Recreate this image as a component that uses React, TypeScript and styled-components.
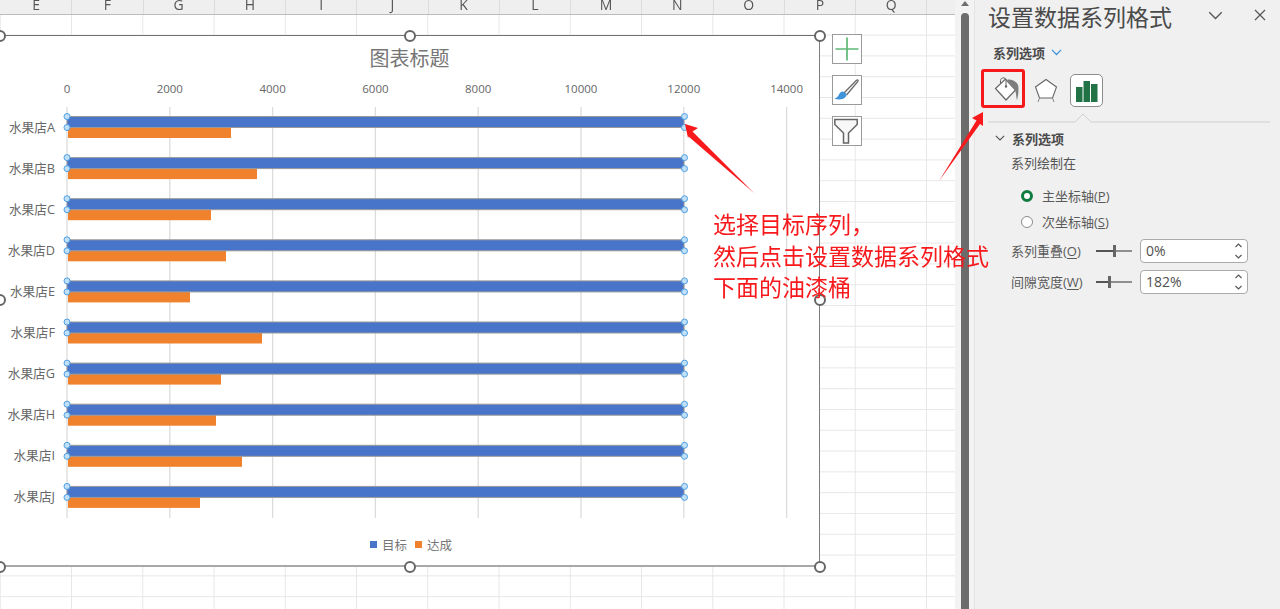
import React from "react";
import styled, { createGlobalStyle } from "styled-components";

const FONT = `"Open Sans", "Noto Sans CJK SC", sans-serif`;
const COL_W = 71.25;

const Global = createGlobalStyle`
  html, body { margin: 0; padding: 0; background: #fff; overflow: hidden; }
  #root { width: 1280px; height: 609px; }
`;

const Page = styled.div`
  position: relative;
  display: flex;
  width: 1280px;
  height: 609px;
  overflow: hidden;
  font-family: ${FONT};
  filter: blur(0.4px);
`;

/* ---------- spreadsheet ---------- */
const Sheet = styled.div`
  position: relative;
  flex: 0 0 955px;
  display: flex;
  flex-direction: column;
  overflow: hidden;
`;
const ColumnHeader = styled.div`
  flex: 0 0 15px;
  display: flex;
  padding-left: 1px;
  background: #efefef;
  border-bottom: 1px solid #bcbcbc;
  box-sizing: border-box;
`;
const ColumnCell = styled.div`
  flex: 0 0 ${COL_W}px;
  box-sizing: border-box;
  border-right: 1px solid #dcdcdc;
  text-align: center;
  font-size: 14px;
  line-height: 10px;
  color: #555;
`;
const Grid = styled.div`
  flex: 1;
  background-image:
    linear-gradient(to right, transparent calc(100% - 1px), #e7e7e7 calc(100% - 1px)),
    linear-gradient(to bottom, transparent calc(100% - 1px), #e7e7e7 calc(100% - 1px));
  background-size: ${COL_W}px 100%, 100% 20.8px;
  background-position: 0.75px 0, 0 -0.2px;
`;

const ChartFrame = styled.div`
  position: absolute;
  left: 0;
  top: 35px;
  width: 820px;
  height: 532px;
  box-sizing: border-box;
  background: #fff;
  border-top: 1.5px solid #6f6f6f;
  border-right: 1.5px solid #7d7d7d;
  border-bottom: 2px solid #a8a8a8;
  display: flex;
  flex-direction: column;
`;
const ChartTitle = styled.div`
  flex: 0 0 45px;
  text-align: center;
  font-size: 20px;
  line-height: 45px;
  color: #767676;
`;
const PlotSvg = styled.svg`
  display: block;
  flex: 0 0 449px;
  width: 820px;
  height: 449px;
`;
const AxisText = styled.text<{ $size?: number }>`
  font-family: ${FONT};
  font-size: ${(p) => p.$size ?? 11.5}px;
  fill: #666;
`;
const Legend = styled.div`
  flex: 1;
  display: flex;
  justify-content: center;
  align-items: center;
  gap: 8px;
  padding: 0 0 6px 3px;
  font-size: 12.5px;
  color: #767676;
`;
const LegendItem = styled.span`
  display: flex;
  align-items: center;
  gap: 5px;
`;
const Swatch = styled.i<{ $c: string }>`
  width: 7px;
  height: 7px;
  background: ${(p) => p.$c};
`;
const Handle = styled.i<{ $x: number; $y: number }>`
  position: absolute;
  left: ${(p) => p.$x - 6}px;
  top: ${(p) => p.$y - 6}px;
  width: 12px;
  height: 12px;
  box-sizing: border-box;
  border-radius: 50%;
  border: 2px solid #666;
  background: #fff;
`;
const SideButtons = styled.div`
  position: absolute;
  left: 832px;
  top: 34px;
  display: flex;
  flex-direction: column;
  gap: 11px;
`;
const SideButton = styled.div`
  width: 30px;
  height: 30px;
  box-sizing: border-box;
  border: 1.5px solid #9a9a9a;
  background: #fff;
  display: flex;
  align-items: center;
  justify-content: center;
`;

/* ---------- scrollbar ---------- */
const ScrollTrack = styled.div`
  position: relative;
  flex: 0 0 20px;
  background: #f3f3f3;
  border-right: 1px solid #e4e4e4;
  box-sizing: border-box;
`;
const ScrollArrow = styled.div`
  position: absolute;
  left: 6px;
  top: 1px;
  border-left: 4px solid transparent;
  border-right: 4px solid transparent;
  border-bottom: 5px solid #6e6e6e;
`;
const ScrollThumb = styled.div`
  position: absolute;
  left: 6px;
  top: 13px;
  bottom: 0;
  width: 8px;
  background: #6c6c6c;
  border-radius: 4px 4px 0 0;
`;

/* ---------- format pane ---------- */
const Pane = styled.aside`
  flex: 1;
  background: #f0f0f0;
  color: #444;
  display: flex;
  flex-direction: column;
  padding-left: 13px;
  box-sizing: border-box;
`;
const PaneHead = styled.div`
  flex: 0 0 35px;
  display: flex;
  align-items: center;
  padding-right: 14px;
`;
const PaneTitle = styled.div`
  flex: 1;
  font-size: 23px;
  line-height: 35px;
  white-space: nowrap;
  color: #4a4a4a;
`;
const HeadIcons = styled.div`
  display: flex;
  gap: 31px;
  align-items: center;
  margin-top: -5px;
  margin-right: 0;
`;
const OptionLabel = styled.div`
  flex: 0 0 35px;
  display: flex;
  align-items: center;
  gap: 6px;
  padding-left: 5px;
  font-size: 13px;
  font-weight: 700;
  color: #4a4a4a;
`;
const TabRow = styled.div`
  flex: 0 0 46px;
  display: flex;
  align-items: center;
  margin-top: -3px;
`;
const IconTab = styled.div<{ $active?: boolean }>`
  width: 33px;
  height: 33px;
  margin-right: 8px;
  box-sizing: border-box;
  display: flex;
  align-items: center;
  justify-content: center;
  border-radius: 5px;
  ${(p) => (p.$active ? "background:#fff;border:1px solid #8c8c8c;" : "")}
`;
const DividerSvg = styled.svg`
  display: block;
  flex: 0 0 10px;
  width: 282px;
  height: 10px;
`;
const Section = styled.div`
  flex: 0 0 30px;
  display: flex;
  align-items: center;
  gap: 7px;
  padding-left: 7px;
  margin-top: 0;
  font-size: 13px;
  font-weight: 700;
  color: #4a4a4a;
`;
const SubLabel = styled.div`
  flex: 0 0 20px;
  padding-left: 23px;
  margin-top: 1px;
  font-size: 13px;
  line-height: 18px;
  color: #555;
`;
const Radios = styled.div`
  display: flex;
  flex-direction: column;
  padding: 11px 0 0 33px;
  gap: 5px;
`;
const RadioRow = styled.div`
  height: 21px;
  display: flex;
  align-items: center;
  gap: 9px;
  font-size: 13px;
  color: #5a5a5a;
`;
const RadioDot = styled.i<{ $on?: boolean }>`
  width: 12px;
  height: 12px;
  box-sizing: border-box;
  border-radius: 50%;
  background: #fff;
  border: ${(p) => (p.$on ? "3.5px solid #107c41" : "1.5px solid #8a8a8a")};
`;
const Fields = styled.div`
  display: flex;
  flex-direction: column;
  gap: 8px;
  padding: 7px 0 0 23px;
`;
const FieldRow = styled.div`
  height: 23px;
  display: flex;
  align-items: center;
`;
const FieldLabel = styled.span`
  flex: 0 0 85px;
  font-size: 13px;
  color: #5a5a5a;
  white-space: nowrap;
  u { text-underline-offset: 2px; }
`;
const Slider = styled.div<{ $pos: number }>`
  position: relative;
  flex: 0 0 36px;
  height: 2px;
  background: #8f8f8f;
  &::before {
    content: "";
    position: absolute;
    left: 0;
    top: 0;
    height: 2px;
    width: ${(p) => p.$pos}px;
    background: #555;
  }
  &::after {
    content: "";
    position: absolute;
    left: ${(p) => p.$pos}px;
    top: -5px;
    width: 3px;
    height: 12px;
    background: #666;
  }
`;
const SpinBox = styled.div`
  margin-left: 8px;
  flex: 0 0 108px;
  height: 24px;
  box-sizing: border-box;
  border: 1px solid #aaa;
  border-radius: 4px;
  background: #fff;
  display: flex;
  align-items: center;
  justify-content: space-between;
  padding: 0 4px 0 5px;
  font-size: 14px;
  color: #505050;
`;

/* ---------- annotation ---------- */
const Note = styled.div`
  position: absolute;
  left: 713px;
  top: 208px;
  font-size: 23px;
  line-height: 31.5px;
  color: #f7191c;
  white-space: pre;
  font-family: "Noto Sans CJK SC", sans-serif;
`;
const RedBox = styled.div`
  position: absolute;
  left: 981px;
  top: 69px;
  width: 44px;
  height: 39px;
  box-sizing: border-box;
  border: 3px solid #f5191c;
  border-radius: 3px;
`;
const Overlay = styled.svg`
  position: absolute;
  left: 0;
  top: 0;
  width: 1280px;
  height: 609px;
  pointer-events: none;
`;

/* ---------- data ---------- */
const columns = "EFGHIJKLMNOPQ".split("");
const stores = ["A", "B", "C", "D", "E", "F", "G", "H", "I", "J"];
const achieved = [231, 257, 211, 226, 190, 262, 221, 216, 242, 200];
const ticks = [0, 2000, 4000, 6000, 8000, 10000, 12000, 14000];
const X0 = 67;
const STEP = 102.8;
const handles: [number, number][] = [
  [0, 35.5], [409.5, 35.5], [819.5, 35.5], [0, 300], [819.5, 300], [0, 566.7], [409.5, 566.7], [819.5, 566.7],
];

function Chevron({ c = "#555", w = 12, sw = 1.4 }: { c?: string; w?: number; sw?: number }) {
  return (
    <svg width={w} height={w * 0.6} viewBox="0 0 12 7.2">
      <path d="M1 1l5 5 5-5" fill="none" stroke={c} strokeWidth={sw} />
    </svg>
  );
}

function Spinner() {
  return (
    <svg width="9" height="20" viewBox="0 0 9 20">
      <path d="M1.5 6l3-3 3 3M1.5 14l3 3 3-3" fill="none" stroke="#555" strokeWidth="1.1" />
    </svg>
  );
}

export default function App() {
  return (
    <Page>
      <Global />
      <Sheet>
        <ColumnHeader>
          {columns.map((c) => (
            <ColumnCell key={c}>{c}</ColumnCell>
          ))}
        </ColumnHeader>
        <Grid />
        <ChartFrame>
          <ChartTitle>图表标题</ChartTitle>
          <PlotSvg viewBox="0 81 820 449">
            {ticks.map((t, i) => {
              const x = X0 + i * STEP;
              return (
                <g key={t}>
                  <line x1={x} x2={x} y1={107} y2={518} stroke="#dcdcdc" strokeWidth="1.3" />
                  <AxisText x={x} y={93} textAnchor="middle">{t}</AxisText>
                </g>
              );
            })}
            {stores.map((s, i) => {
              const y = 116.5 + i * 41.1;
              return (
                <g key={s}>
                  <AxisText $size={12.7} x={55} y={y + 15} textAnchor="end">{`水果店${s}`}</AxisText>
                  <rect x={68} y={y + 11} width={achieved[i] - 68} height={10.5} fill="#f0822e" />
                  <rect x={67} y={y} width={617} height={11} fill="#4874c9" stroke="#9a9a9a" strokeWidth="1" />
                  {[[67, y], [67, y + 11], [684.5, y], [684.5, y + 11]].map(([hx, hy], k) => (
                    <circle key={k} cx={hx} cy={hy} r="3" fill="#bfe0f8" stroke="#4f9fe0" strokeWidth="1" />
                  ))}
                </g>
              );
            })}
          </PlotSvg>
          <Legend>
            <LegendItem><Swatch $c="#4874c9" />目标</LegendItem>
            <LegendItem><Swatch $c="#f0822e" />达成</LegendItem>
          </Legend>
        </ChartFrame>
        {handles.map(([x, y], i) => (
          <Handle key={i} $x={x} $y={y} />
        ))}
        <SideButtons>
          <SideButton>
            <svg width="24" height="24" viewBox="0 0 24 24">
              <path d="M12 0.5v23M0.5 12h23" stroke="#5fb877" strokeWidth="1.7" fill="none" />
            </svg>
          </SideButton>
          <SideButton>
            <svg width="26" height="26" viewBox="0 0 26 26">
              <path d="M10 16L22.5 3.2c1-.8 2 .2 1.4 1.2L12.5 18" fill="#fff" stroke="#6d6d6d" strokeWidth="1.4" />
              <path d="M9 14.5c-2.7 0-3.6 2-4.4 3.8-.6 1.3-2.3 2.6-4.1 3.4 3.6 1.4 8.6 1 10.8-1.4 1.2-1.4 1.6-2.8 1.1-3.6z" fill="#3f93d8" />
            </svg>
          </SideButton>
          <SideButton>
            <svg width="26" height="28" viewBox="0 0 26 28">
              <path d="M0.8 2.5h22.4v5l-8.7 8.5v10h-5V16L0.8 7.5z" fill="#f8f8f8" stroke="#666" strokeWidth="1.5" />
            </svg>
          </SideButton>
        </SideButtons>
      </Sheet>

      <ScrollTrack>
        <ScrollArrow />
        <ScrollThumb />
      </ScrollTrack>

      <Pane>
        <PaneHead>
          <PaneTitle>设置数据系列格式</PaneTitle>
          <HeadIcons>
            <Chevron c="#555" w={15} sw={1.1} />
            <svg width="12" height="12" viewBox="0 0 12 12">
              <path d="M1 1l10 10M11 1L1 11" stroke="#555" strokeWidth="1.2" fill="none" />
            </svg>
          </HeadIcons>
        </PaneHead>
        <OptionLabel>
          系列选项
          <Chevron c="#3f93d8" w={11} />
        </OptionLabel>
        <TabRow>
          <IconTab>
            <svg width="32" height="30" viewBox="0 0 32 30">
              <path d="M6.5 13.5L16.5 4l10 11-9.5 10z" fill="#fff" stroke="#666" strokeWidth="1.2" />
              <path d="M11.5 8.5V5.5c0-3.4 5.5-3.6 5.5-.2v6" fill="none" stroke="#666" strokeWidth="1" />
              <circle cx="17" cy="11.5" r="1.2" fill="#666" />
              <path d="M18.5 4.5c4.5 0 9 1.8 10.5 5.5 1 2.8.3 11.5-1 15-.9-2.5-.6-8.5-2.6-10.5L20 8.5z" fill="#7d7d7d" />
            </svg>
          </IconTab>
          <IconTab>
            <svg width="26" height="28" viewBox="0 0 26 28">
              <path d="M13 3.5L23.5 11 19.5 22H6.5L2.5 11z" fill="#fff" stroke="#666" strokeWidth="1.1" />
              <path d="M6.5 22l-1.5 4M19.5 22l1.5 4" stroke="#888" strokeWidth="1" />
            </svg>
          </IconTab>
          <IconTab $active>
            <svg width="24" height="24" viewBox="0 0 24 24">
              <path d="M1 9h6.5v15H1zM8.5 3h6.5v21H8.5zM16 6h6.5v18H16z" fill="#217346" />
            </svg>
          </IconTab>
        </TabRow>
        <DividerSvg viewBox="0 0 282 10">
          <path d="M0 9h87l8-8 8 8h179" fill="none" stroke="#cfcfcf" strokeWidth="1" />
        </DividerSvg>
        <Section>
          <Chevron c="#555" w={10} />
          系列选项
        </Section>
        <SubLabel>系列绘制在</SubLabel>
        <Radios>
          <RadioRow>
            <RadioDot $on />
            <span>主坐标轴(<u>P</u>)</span>
          </RadioRow>
          <RadioRow>
            <RadioDot />
            <span>次坐标轴(<u>S</u>)</span>
          </RadioRow>
        </Radios>
        <Fields>
          <FieldRow>
            <FieldLabel>系列重叠(<u>O</u>)</FieldLabel>
            <Slider $pos={17} />
            <SpinBox>0%<Spinner /></SpinBox>
          </FieldRow>
          <FieldRow>
            <FieldLabel>间隙宽度(<u>W</u>)</FieldLabel>
            <Slider $pos={12} />
            <SpinBox>182%<Spinner /></SpinBox>
          </FieldRow>
        </Fields>
      </Pane>

      <Note>{"选择目标序列，\n然后点击设置数据系列格式\n下面的油漆桶"}</Note>
      <RedBox />
      <Overlay viewBox="0 0 1280 609">
        <path d="M685 124L698 128 692.5 131.5 754 193 688.5 136.5 688 138z" fill="#f7191c" />
        <path d="M983 112L972 118 976.5 120.5 939 181 980 124 983 126z" fill="#f7191c" />
      </Overlay>
    </Page>
  );
}
